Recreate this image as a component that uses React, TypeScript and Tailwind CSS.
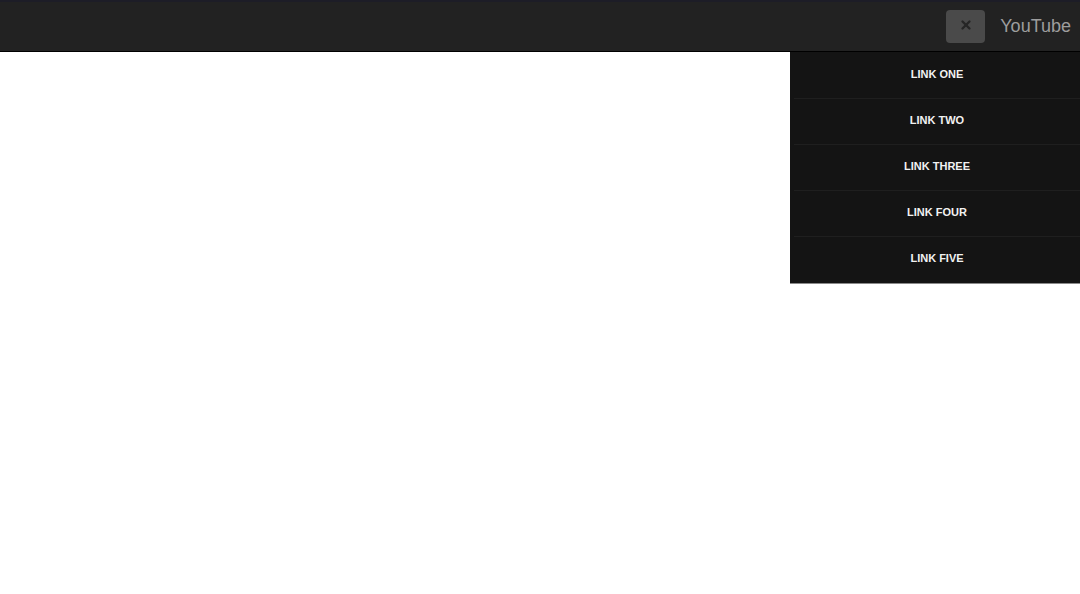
import { X } from "lucide-react"

const links = ["Link One", "Link Two", "Link Three", "Link Four", "Link Five"]

export default function App() {
  return (
    <div className="relative min-h-[594px] bg-white" style={{ fontFamily: '"Liberation Sans", Arial, sans-serif' }}>
      <header className="h-[52px] border-t-2 border-[#1d1d27] border-b border-b-black bg-[#222222]">
        <div className="flex h-full items-center justify-end pr-[9px]">
          <button className="flex h-[33px] w-[39px] items-center justify-center rounded-[4px] bg-[#4a4a4a]">
            <X size={14} strokeWidth={4} className="mb-[4px] text-[#262626]" />
          </button>
          <a href="#" className="mb-[2px] ml-[15px] text-[18px] leading-none text-[#9d9d9d]">
            YouTube
          </a>
        </div>
      </header>

      <nav className="absolute right-0 top-[52px] w-[290px] bg-[#141414] pb-[1px] pl-[4px] shadow-[0_1px_0_#8a8a8a]">
        {links.map((l, i) => (
          <a
            key={l}
            href="#"
            className={`flex h-[46px] items-center justify-center pb-[2px] text-[11px] font-bold uppercase text-[#f2f2f2] ${
              i > 0 ? "border-t border-[#1f1f1f]" : ""
            }`}
          >
            {l}
          </a>
        ))}
      </nav>
    </div>
  )
}
